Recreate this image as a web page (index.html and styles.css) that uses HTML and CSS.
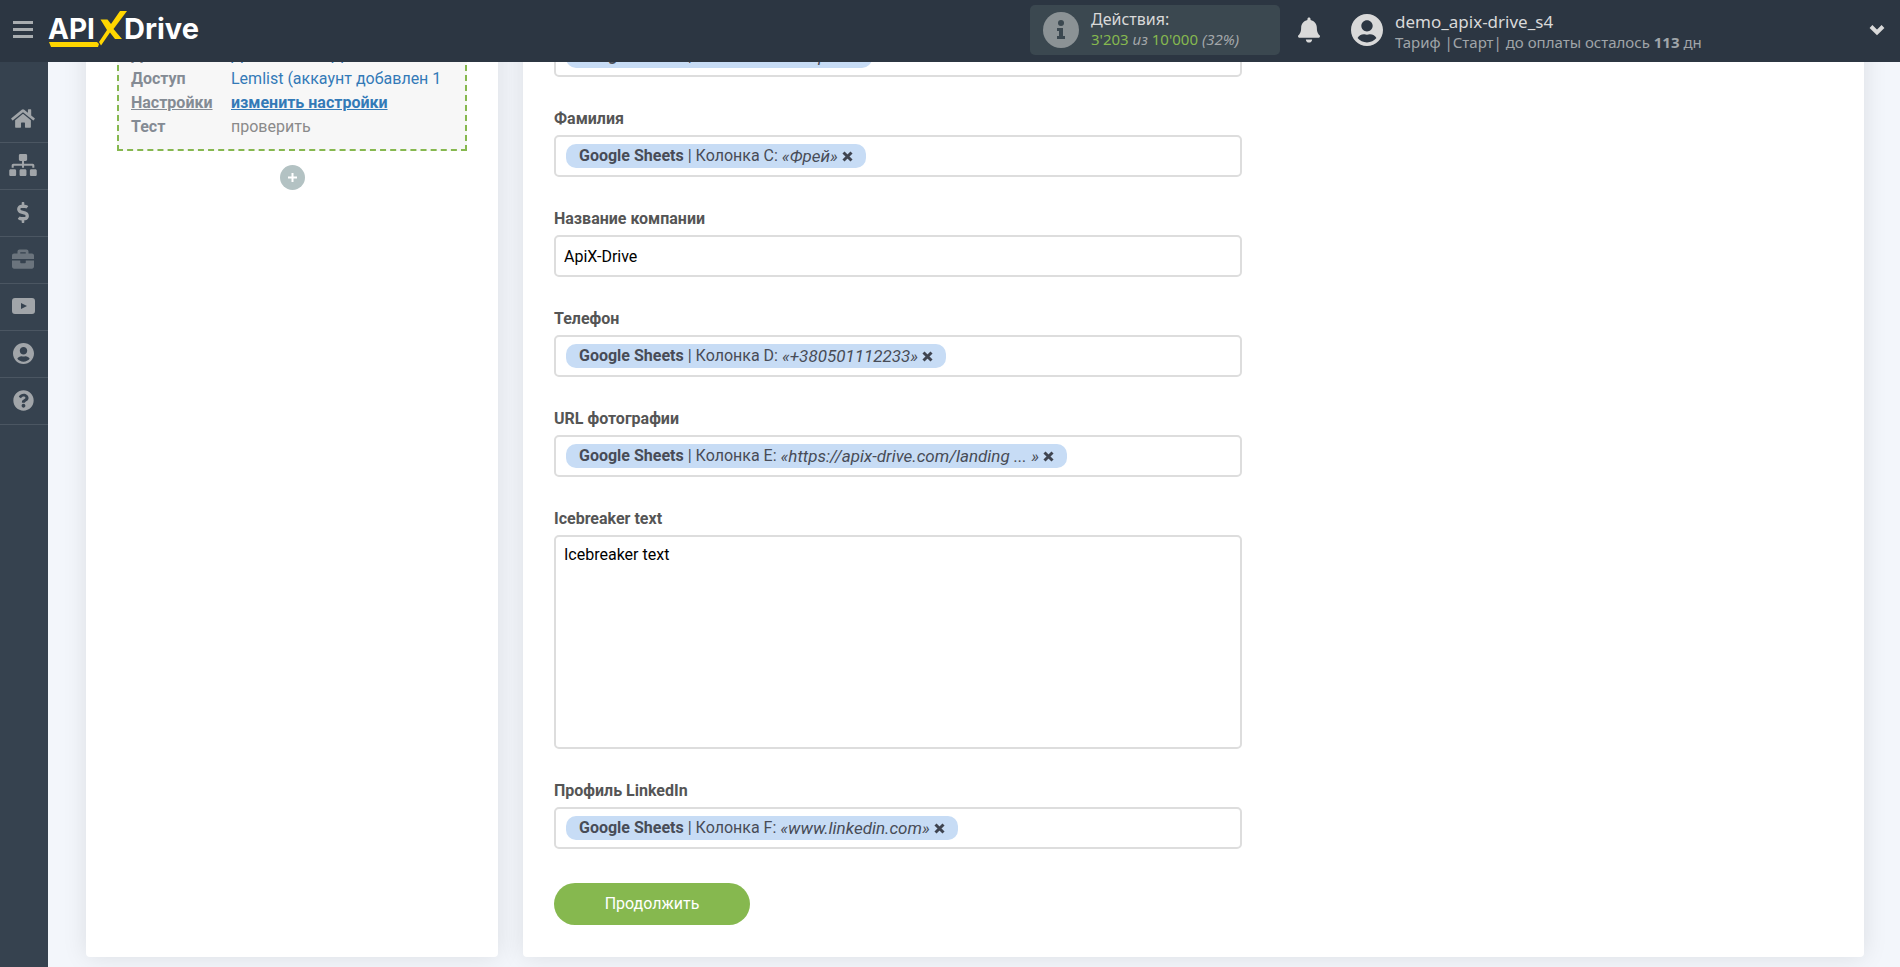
FILE: index.html
```html
<!DOCTYPE html>
<html lang="ru">
<head>
<meta charset="utf-8">
<title>ApiX-Drive</title>
<link rel="stylesheet" href="styles.css">
</head>
<body>
<header class="topbar">
  <button class="icon-btn burger" aria-label="Меню"><svg width="20" height="18" viewBox="0 0 20 18"><path d="M0 1.500h20M0 8.500h20M0 15.500h20" stroke="#a9adb0" stroke-width="3"/></svg></button>
  <a class="logo" href="#" aria-label="ApiX-Drive">
    <svg width="158" height="40" viewBox="0 0 158 40">
      <text class="logo-text" x="0" y="29">API</text>
      <text class="logo-text logo-drive" x="76" y="29">Drive</text>
      <path d="M1 32h48l2 2-1 3H3z" fill="#ffd600"/>
      <path d="M72 1h7L65.500 19l8.500 10h-7l-5-6.500L53 35.500l-2-3.500 8-12-6.500-10.500h7L63 14z" fill="#ffd600"/>
    </svg>
  </a>
  <div class="usage">
    <svg width="36" height="36" viewBox="0 0 36 36"><circle cx="18" cy="18" r="18" fill="#8b9295"/><circle cx="18" cy="11" r="3" fill="#3b4850"/><path d="M14 16h6v8h2v3h-8v-3h2v-5h-2z" fill="#3b4850"/></svg>
    <div class="usage-text">
      <div class="usage-title">Действия:</div>
      <div class="usage-count"><span class="green">3'203</span> <i>из</i> <span class="green">10'000</span> <i>(32%)</i></div>
    </div>
  </div>
  <button class="icon-btn bell" aria-label="Уведомления"><svg width="22" height="26" viewBox="0 0 448 512"><path fill="#d9d9d9" d="M224 512c35.320 0 63.970-28.650 63.970-64H160.030c0 35.350 28.650 64 63.970 64zm215.390-149.710c-19.320-20.760-55.470-51.990-55.470-154.290 0-77.700-54.480-139.900-127.940-155.160V32c0-17.670-14.320-32-31.980-32s-31.980 14.330-31.980 32v20.840C118.560 68.100 64.080 130.300 64.080 208c0 102.300-36.150 133.530-55.470 154.290-6 6.450-8.660 14.160-8.610 21.710.11 16.400 12.980 32 32.100 32h383.800c19.120 0 32-15.600 32.100-32 .05-7.550-2.610-15.270-8.610-21.710z"/></svg></button>
  <div class="account">
    <svg width="32" height="32" viewBox="0 0 496 496"><path fill="#d9d9d9" d="M248 0C111 0 0 111 0 248s111 248 248 248 248-111 248-248S385 0 248 0zm0 96c48.600 0 88 39.400 88 88s-39.400 88-88 88-88-39.400-88-88 39.400-88 88-88zm0 344c-58.700 0-111.300-26.600-146.500-68.200 18.800-35.400 55.600-59.800 98.500-59.800 2.400 0 4.800.4 7.100 1.100 13 4.200 26.600 6.900 40.900 6.900s28-2.700 40.900-6.900c2.300-.7 4.700-1.100 7.100-1.100 42.900 0 79.700 24.400 98.500 59.800C359.300 413.400 306.700 440 248 440z"/></svg>
    <div class="account-text">
      <div class="account-name">demo_apix-drive_s4</div>
      <div class="account-plan">Тариф |Старт| до оплаты осталось <b>113</b> дн</div>
    </div>
  </div>
  <button class="icon-btn" aria-label="Открыть меню"><svg width="16" height="12" viewBox="0 0 16 12"><path d="M2 2.500l6 6 6-6" fill="none" stroke="#d9d9d9" stroke-width="4"/></svg></button>
</header>
<div class="shell">
  <nav class="side">
    <a href="#" aria-label="Главная"><svg width="24" height="21" viewBox="0 0 576 512"><path d="M280.370 148.260L96 300.110V464a16 16 0 0 0 16 16l112-.29a16 16 0 0 0 15.920-16V368a16 16 0 0 1 16-16h64a16 16 0 0 1 16 16v95.640a16 16 0 0 0 16 16.050L464 480a16 16 0 0 0 16-16V300L295.670 148.260a12.190 12.190 0 0 0-15.300 0zM571.600 251.470L488 182.560V44a12 12 0 0 0-12-12h-56a12 12 0 0 0-12 12v72.610L318.470 43a48 48 0 0 0-61 0L4.340 251.470a12 12 0 0 0-1.600 16.900l25.500 31A12 12 0 0 0 45.150 301l235.220-193.740a12.190 12.190 0 0 1 15.300 0L530.900 301a12 12 0 0 0 16.900-1.600l25.500-31a12 12 0 0 0-1.700-16.930z"/></svg></a>
    <a href="#" aria-label="Связи"><svg width="28" height="22" viewBox="0 0 640 512"><path d="M128 352H32c-17.670 0-32 14.330-32 32v96c0 17.670 14.330 32 32 32h96c17.670 0 32-14.330 32-32v-96c0-17.670-14.330-32-32-32zm-24-80h192v48h48v-48h192v48h48v-57.590c0-21.170-17.230-38.410-38.410-38.410H344v-64h40c17.670 0 32-14.330 32-32V32c0-17.670-14.330-32-32-32H256c-17.670 0-32 14.330-32 32v96c0 17.670 14.330 32 32 32h40v64H94.410C73.230 224 56 241.230 56 262.410V320h48v-48zm264 80h-96c-17.670 0-32 14.330-32 32v96c0 17.670 14.330 32 32 32h96c17.670 0 32-14.330 32-32v-96c0-17.670-14.330-32-32-32zm240 0h-96c-17.670 0-32 14.330-32 32v96c0 17.670 14.330 32 32 32h96c17.670 0 32-14.330 32-32v-96c0-17.670-14.330-32-32-32z"/></svg></a>
    <a href="#" aria-label="Оплата"><svg width="12" height="21" viewBox="0 0 288 512"><path d="M209.200 233.400l-108-31.600C88.700 198.200 80 186.500 80 173.500c0-16.300 13.200-29.500 29.500-29.500h66.300c12.200 0 24.200 3.700 34.200 10.500 6.100 4.100 14.300 3.100 19.500-2l34.800-34c7.100-6.900 6.100-18.400-1.800-24.500C238 74.800 207.400 64.100 176 64V16c0-8.800-7.200-16-16-16h-32c-8.800 0-16 7.200-16 16v48h-2.500C45.800 64-5.400 118.700.5 183.600c4.200 46.100 39.400 83.600 83.800 96.600l102.500 30c12.500 3.700 21.200 15.300 21.200 28.300 0 16.300-13.200 29.500-29.500 29.500h-66.300C100 368 88 364.300 78 357.500c-6.100-4.100-14.300-3.100-19.500 2l-34.800 34c-7.100 6.900-6.100 18.400 1.800 24.500 24.500 19.200 55.100 29.900 86.500 30v48c0 8.800 7.200 16 16 16h32c8.800 0 16-7.200 16-16v-48.200c46.600-.9 90.300-28.600 105.700-72.700 21.500-61.600-14.600-124.800-72.500-141.700z"/></svg></a>
    <a href="#" class="muted" aria-label="Проекты"><svg width="22" height="22" viewBox="0 0 512 512"><path d="M320 336c0 8.840-7.160 16-16 16h-96c-8.840 0-16-7.160-16-16v-48H0v144c0 25.600 22.400 48 48 48h416c25.600 0 48-22.400 48-48V288H320v48zm144-208h-80V80c0-25.600-22.400-48-48-48H176c-25.600 0-48 22.400-48 48v48H48c-25.600 0-48 22.400-48 48v80h512v-80c0-25.600-22.400-48-48-48zm-144 0H192V96h128v32z"/></svg></a>
    <a href="#" aria-label="Видео"><svg width="23" height="16" viewBox="0 0 23 16"><path fill-rule="evenodd" d="M3 0h17q3 0 3 3v10q0 3-3 3H3q-3 0-3-3V3q0-3 3-3zm6 5v6l6-3z"/></svg></a>
    <a href="#" aria-label="Профиль"><svg width="21" height="21" viewBox="0 0 496 496"><path d="M248 0C111 0 0 111 0 248s111 248 248 248 248-111 248-248S385 0 248 0zm0 96c48.600 0 88 39.400 88 88s-39.400 88-88 88-88-39.400-88-88 39.400-88 88-88zm0 344c-58.700 0-111.300-26.600-146.500-68.200 18.800-35.400 55.600-59.800 98.500-59.800 2.400 0 4.800.4 7.100 1.100 13 4.200 26.600 6.900 40.900 6.900s28-2.700 40.900-6.900c2.300-.7 4.700-1.100 7.100-1.100 42.900 0 79.700 24.400 98.500 59.800C359.300 413.400 306.700 440 248 440z"/></svg></a>
    <a href="#" aria-label="Помощь"><svg width="21" height="21" viewBox="0 0 512 512"><path d="M504 256c0 136.997-111.043 248-248 248S8 392.997 8 256C8 119.083 119.043 8 256 8s248 111.083 248 248zM262.655 90c-54.497 0-89.255 22.957-116.549 63.758-3.536 5.286-2.353 12.415 2.715 16.258l34.699 26.310c5.205 3.947 12.621 3.008 16.665-2.122 17.864-22.658 30.113-35.797 57.303-35.797 20.429 0 45.698 13.148 45.698 32.958 0 14.976-12.363 22.667-32.534 33.976C247.128 238.528 216 254.941 216 296v4c0 6.627 5.373 12 12 12h56c6.627 0 12-5.373 12-12v-1.333c0-28.462 83.186-29.647 83.186-106.667 0-58.002-60.165-102-116.531-102zM256 338c-25.365 0-46 20.635-46 46 0 25.364 20.635 46 46 46s46-20.636 46-46c0-25.365-20.635-46-46-46z"/></svg></a>
  </nav>
  <main class="content">
    <section class="card steps">
      <div class="step-box">
        <div class="step-row"><b>Действие</b><a href="#">Добавить ЛИД</a></div>
        <div class="step-row"><b>Доступ</b><a href="#">Lemlist (аккаунт добавлен 1</a></div>
        <div class="step-row current"><b>Настройки</b><a href="#">изменить настройки</a></div>
        <div class="step-row"><b>Тест</b><span>проверить</span></div>
      </div>
      <button class="add" aria-label="Добавить блок"><svg width="9" height="9" viewBox="0 0 9 9"><path d="M4.500 0v9M0 4.500h9" stroke="#fff" stroke-width="2"/></svg></button>
    </section>
    <section class="card settings">
      <form class="form">
        <div class="field">
          <div class="box"><span class="chip"><b>Google Sheets</b> | Колонка B: <i>«Клара»</i> <button type="button" aria-label="Удалить"><svg width="11" height="11" viewBox="0 0 11 11"><path d="M1.500 1.500l8 8M9.500 1.500l-8 8"/></svg></button></span></div>
        </div>
        <div class="field">
          <div class="label">Фамилия</div>
          <div class="box"><span class="chip"><b>Google Sheets</b> | Колонка C: <i>«Фрей»</i> <button type="button" aria-label="Удалить"><svg width="11" height="11" viewBox="0 0 11 11"><path d="M1.500 1.500l8 8M9.500 1.500l-8 8"/></svg></button></span></div>
        </div>
        <div class="field">
          <label class="label" for="company">Название компании</label>
          <input class="box" id="company" type="text" value="ApiX-Drive">
        </div>
        <div class="field">
          <div class="label">Телефон</div>
          <div class="box"><span class="chip"><b>Google Sheets</b> | Колонка D: <i>«+380501112233»</i> <button type="button" aria-label="Удалить"><svg width="11" height="11" viewBox="0 0 11 11"><path d="M1.500 1.500l8 8M9.500 1.500l-8 8"/></svg></button></span></div>
        </div>
        <div class="field">
          <div class="label">URL фотографии</div>
          <div class="box"><span class="chip"><b>Google Sheets</b> | Колонка E: <i>«https://apix-drive.com/landing ... »</i> <button type="button" aria-label="Удалить"><svg width="11" height="11" viewBox="0 0 11 11"><path d="M1.500 1.500l8 8M9.500 1.500l-8 8"/></svg></button></span></div>
        </div>
        <div class="field">
          <label class="label" for="icebreaker">Icebreaker text</label>
          <textarea class="box area" id="icebreaker">Icebreaker text</textarea>
        </div>
        <div class="field">
          <div class="label">Профиль LinkedIn</div>
          <div class="box"><span class="chip"><b>Google Sheets</b> | Колонка F: <i>«www.linkedin.com»</i> <button type="button" aria-label="Удалить"><svg width="11" height="11" viewBox="0 0 11 11"><path d="M1.500 1.500l8 8M9.500 1.500l-8 8"/></svg></button></span></div>
        </div>
        <button class="submit" type="button">Продолжить</button>
      </form>
    </section>
  </main>
</div>
</body>
</html>
```
FILE: styles.css
```css
* { box-sizing: border-box; }
body {
  margin: 0;
  height: 100vh;
  display: flex;
  flex-direction: column;
  overflow: hidden;
  background: #f3f6fb;
  color: #4c4c4c;
  font: 16px/24px Roboto, sans-serif;
}
button { padding: 0; border: 0; background: none; font: inherit; cursor: pointer; }
svg { display: block; flex: none; }

.topbar {
  flex: none;
  height: 62px;
  display: flex;
  align-items: center;
  padding: 0 15px 2px 13px;
  background: #2c3642;
  color: #d9d9d9;
  font-family: "Noto Sans", sans-serif;
}
.logo { margin: 0 auto 0 15px; }
.logo-text { font: 700 28px Inter, sans-serif; fill: #fff; }
.logo-drive { font-size: 29px; }
.usage {
  display: flex;
  align-items: center;
  gap: 12px;
  width: 250px;
  height: 50px;
  padding: 0 13px;
  border-radius: 5px;
  background: #3b4850;
}
.usage-text { padding-bottom: 2px; }
.usage-title { line-height: 20px; }
.usage-count { font-size: 15px; line-height: 20px; color: #a3a7aa; }
.green { color: #86b84f; }
.bell { margin: 0 31px 0 18px; }
.account { display: flex; align-items: center; gap: 12px; width: 518px; }
.account-text { padding-top: 4px; }
.account-name { font-size: 17px; line-height: 20px; }
.account-plan { font-size: 15px; line-height: 20px; color: #a0a5a9; }

.shell { flex: 1; min-height: 0; display: flex; }
.side { width: 48px; flex: none; padding-top: 34px; background: #36424f; }
.side a {
  display: flex;
  align-items: center;
  justify-content: center;
  height: 47px;
  padding: 0 2px 2px 0;
  border-bottom: 1px solid #4b5662;
}
.side svg { fill: #a1a5a9; }
.side .muted svg { fill: #6b747d; }

.content {
  flex: 1;
  min-width: 0;
  overflow: hidden;
  display: grid;
  grid-template-columns: 412fr 1341fr;
  gap: 25px;
  align-content: end;
  padding: 0 36px 10px 38px;
}
.card {
  min-width: 0;
  padding: 31px 31px 32px;
  border-radius: 4px;
  background: #fff;
  box-shadow: 0 0 25px rgba(0, 0, 0, .1);
}
.step-box {
  padding: 6px 12px 10px;
  border: 2px dashed #86b84f;
  background: #f7f7f7;
}
.step-row { display: grid; grid-template-columns: 100px 1fr; color: #8a8a8a; white-space: nowrap; }
.step-row b { color: #848b94; font-weight: 700; }
.step-row a { color: #337ab7; text-decoration: none; }
.step-row.current b, .step-row.current a { text-decoration: underline; }
.step-row.current a { font-weight: 700; }
.add {
  display: flex;
  align-items: center;
  justify-content: center;
  width: 25px;
  height: 25px;
  margin: 14px auto 0;
  border-radius: 50%;
  background: #b3c2c3;
}

.settings { display: grid; grid-template-columns: 688fr 591fr; }
.field { margin-bottom: 30px; }
.label { display: block; margin-bottom: 4px; font-weight: 700; color: #555; }
.box {
  display: block;
  width: 100%;
  height: 42px;
  padding: 7px 10px;
  border: 2px solid #ddd;
  border-radius: 5px;
  background: #fff;
  font: inherit;
}
input.box, textarea.box { padding: 6px 8px; color: #000; }
.area { height: 214px; resize: none; }
.chip {
  display: flex;
  align-items: center;
  gap: 4px;
  width: max-content;
  height: 24px;
  padding: 0 13px;
  border-radius: 10px;
  background: #c7dcf5;
  color: #484c57;
  white-space: nowrap;
}
.chip i { font-size: 17px; }
.chip path { stroke: #3f4450; stroke-width: 3; }
.submit {
  display: block;
  width: 196px;
  height: 42px;
  margin-top: 34px;
  border-radius: 21px;
  background: #86b84f;
  color: #fff;
}
```
